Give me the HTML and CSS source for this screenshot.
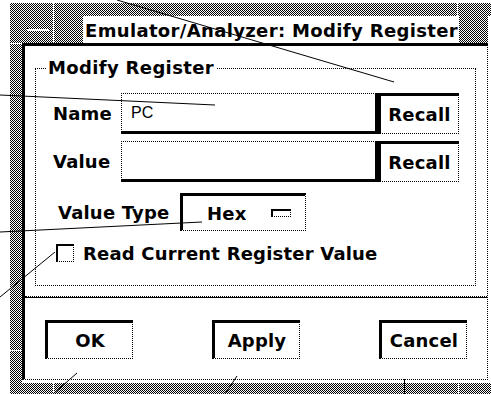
FILE: index.html
```html
<!DOCTYPE html>
<html>
<head>
<meta charset="utf-8">
<title>Emulator/Analyzer: Modify Register</title>
<link rel="stylesheet" href="styles.css">
</head>
<body>
<div class="screen">
  <div class="window">
    <div class="frame-inner">
      <div class="titlebar">
        <div class="menu-btn"><span class="menu-bar"></span></div>
        <div class="title-area"><span class="title">Emulator/Analyzer: Modify Register</span></div>
      </div>
      <div class="client">
        <div class="group">
          <span class="group-title">Modify Register</span>
          <div class="row row-field">
            <span class="label field-label">Name</span>
            <div class="field"><span class="field-text">PC</span></div>
            <button class="btn recall">Recall</button>
          </div>
          <div class="row row-field">
            <span class="label field-label">Value</span>
            <div class="field"><span class="field-text"></span></div>
            <button class="btn recall">Recall</button>
          </div>
          <div class="row row-type">
            <span class="label type-label">Value Type</span>
            <button class="btn option"><span>Hex</span><span class="option-ind"></span></button>
          </div>
          <div class="row row-check">
            <span class="checkbox"></span>
            <span class="label">Read Current Register Value</span>
          </div>
        </div>
        <div class="separator"></div>
        <div class="actions">
          <button class="btn action">OK</button>
          <button class="btn action">Apply</button>
          <button class="btn action">Cancel</button>
        </div>
      </div>
    </div>
  </div>
  <span class="corner corner-tl-v"></span>
  <span class="corner corner-tl-h"></span>
  <span class="corner corner-bl-h"></span>
  <span class="corner corner-bl-v"></span>
  <span class="corner corner-tr-v"></span>
  <span class="corner corner-br-v"></span>
  <svg class="callouts" width="491" height="394" viewBox="0 0 491 394">
    <line x1="117" y1="0" x2="394" y2="82"/>
    <line x1="0" y1="95" x2="215" y2="105"/>
    <line x1="0" y1="232" x2="202" y2="222"/>
    <line x1="0" y1="297" x2="55" y2="252"/>
    <line x1="77" y1="373" x2="53" y2="394"/>
    <line x1="237" y1="376" x2="225" y2="394"/>
    <line x1="404.5" y1="379" x2="404.5" y2="394"/>
  </svg>
</div>
</body>
</html>
```
FILE: styles.css
```css
* { box-sizing: border-box; }
html, body { margin: 0; padding: 0; background: #fff; }
body { font-family: "DejaVu Sans", "Liberation Sans", sans-serif; color: #000; }

.screen {
  position: relative;
  width: 491px;
  height: 394px;
  overflow: hidden;
  background: #fff;
}

.window {
  margin: 3px 0 0 10px;
  width: 481px;
  height: 400px;
  padding: 13px 0 0 12px;
  background: repeating-conic-gradient(#000 0 25%, #fff 0 50%) 0 0 / 2px 2px;
}

.frame-inner {
  width: 466px;
  box-shadow: 3px 0 0 #fff;
}

.titlebar {
  display: flex;
  height: 27px;
}

.menu-btn {
  width: 32px;
  border-right: 1px solid #fff;
  display: flex;
  align-items: center;
  justify-content: center;
}

.menu-bar {
  width: 22px;
  height: 3px;
  background: #fff;
  border-top: 1px dotted #000;
}

.title-area {
  flex: 1;
  display: flex;
  justify-content: center;
}

.title {
  background: #fff;
  font-size: 18px;
  font-weight: bold;
  letter-spacing: 0.35px;
  line-height: 25px;
  padding: 2px 1px 0 2px;
  white-space: nowrap;
}

.client {
  height: 337px;
  background: #fff;
  border-left: 3px solid #000;
  border-top: 3px solid #000;
  border-right: 1px dotted #000;
  border-bottom: 1px dotted #000;
  box-shadow: 0 3px 0 #fff, 3px 3px 0 #fff;
  display: flex;
  flex-direction: column;
}

.group {
  position: relative;
  margin: 22px 0 0 10px;
  width: 441px;
  height: 218px;
  border: 1px dotted #000;
  display: flex;
  flex-direction: column;
  padding-top: 24px;
}

.group-title {
  position: absolute;
  left: 11px;
  top: -11px;
  background: #fff;
  padding: 0 2px 0 1px;
  font-size: 18px;
  font-weight: bold;
  letter-spacing: 0.35px;
  line-height: 20px;
  white-space: nowrap;
}

.row {
  display: flex;
  align-items: center;
}

.label {
  font-size: 18px;
  font-weight: bold;
  letter-spacing: 0.2px;
  white-space: nowrap;
}

.row-field {
  height: 41px;
  padding-left: 17px;
}

.row-field + .row-field { margin-top: 7px; }

.field-label { width: 68px; }

.field {
  width: 257px;
  height: 41px;
  border-top: 1px dotted #000;
  border-left: 1px dotted #000;
  border-right: 3px solid #000;
  border-bottom: 3px solid #000;
  display: flex;
  align-items: center;
  padding-left: 9px;
}

.field-text {
  font-family: "Liberation Sans", Arial, sans-serif;
  font-size: 16px;
}

.btn {
  font-family: inherit;
  font-size: 18px;
  font-weight: bold;
  letter-spacing: 0.2px;
  color: #000;
  background: #fff;
  border-top: 3px solid #000;
  border-left: 3px solid #000;
  border-right: 1px dotted #000;
  border-bottom: 1px dotted #000;
  border-radius: 0;
  margin: 0;
  padding: 0;
  display: flex;
  align-items: center;
  justify-content: center;
}

.recall {
  width: 81px;
  height: 41px;
}

.row-type {
  margin-top: 11px;
  height: 38px;
  padding-left: 22px;
}

.type-label { width: 122px; }

.option {
  width: 126px;
  height: 38px;
  justify-content: flex-start;
  padding-left: 24px;
}

.option-ind {
  width: 20px;
  height: 8px;
  margin-left: 25px;
  border-top: 2px solid #000;
  border-left: 2px solid #000;
  border-right: 1px dotted #000;
  border-bottom: 1px dotted #000;
}

.row-check {
  margin-top: 13px;
  height: 18px;
  padding-left: 20px;
}

.checkbox {
  width: 18px;
  height: 18px;
  margin-right: 9px;
  border-top: 2px solid #000;
  border-left: 2px solid #000;
  border-right: 1px dotted #000;
  border-bottom: 1px dotted #000;
}

.separator {
  margin-top: 10px;
  height: 2px;
  border-top: 1px dotted #000;
  border-bottom: 1px solid #000;
}

.actions {
  display: flex;
  justify-content: space-between;
  padding: 0 20px;
  margin-top: 22px;
}

.action {
  width: 88px;
  height: 39px;
}

.corner {
  position: absolute;
  background: #fff;
}
.corner-tl-v { left: 53px; top: 3px; width: 1px; height: 40px; }
.corner-tl-h { left: 10px; top: 43px; width: 12px; height: 1px; }
.corner-bl-h { left: 10px; top: 350px; width: 12px; height: 1px; }
.corner-bl-v { left: 53px; top: 383px; width: 1px; height: 11px; }
.corner-tr-v { left: 457px; top: 3px; width: 1px; height: 13px; }
.corner-br-v { left: 458px; top: 383px; width: 1px; height: 11px; }

.callouts {
  position: absolute;
  left: 0;
  top: 0;
  pointer-events: none;
}
.callouts line {
  stroke: #000;
  stroke-width: 1;
}
```
